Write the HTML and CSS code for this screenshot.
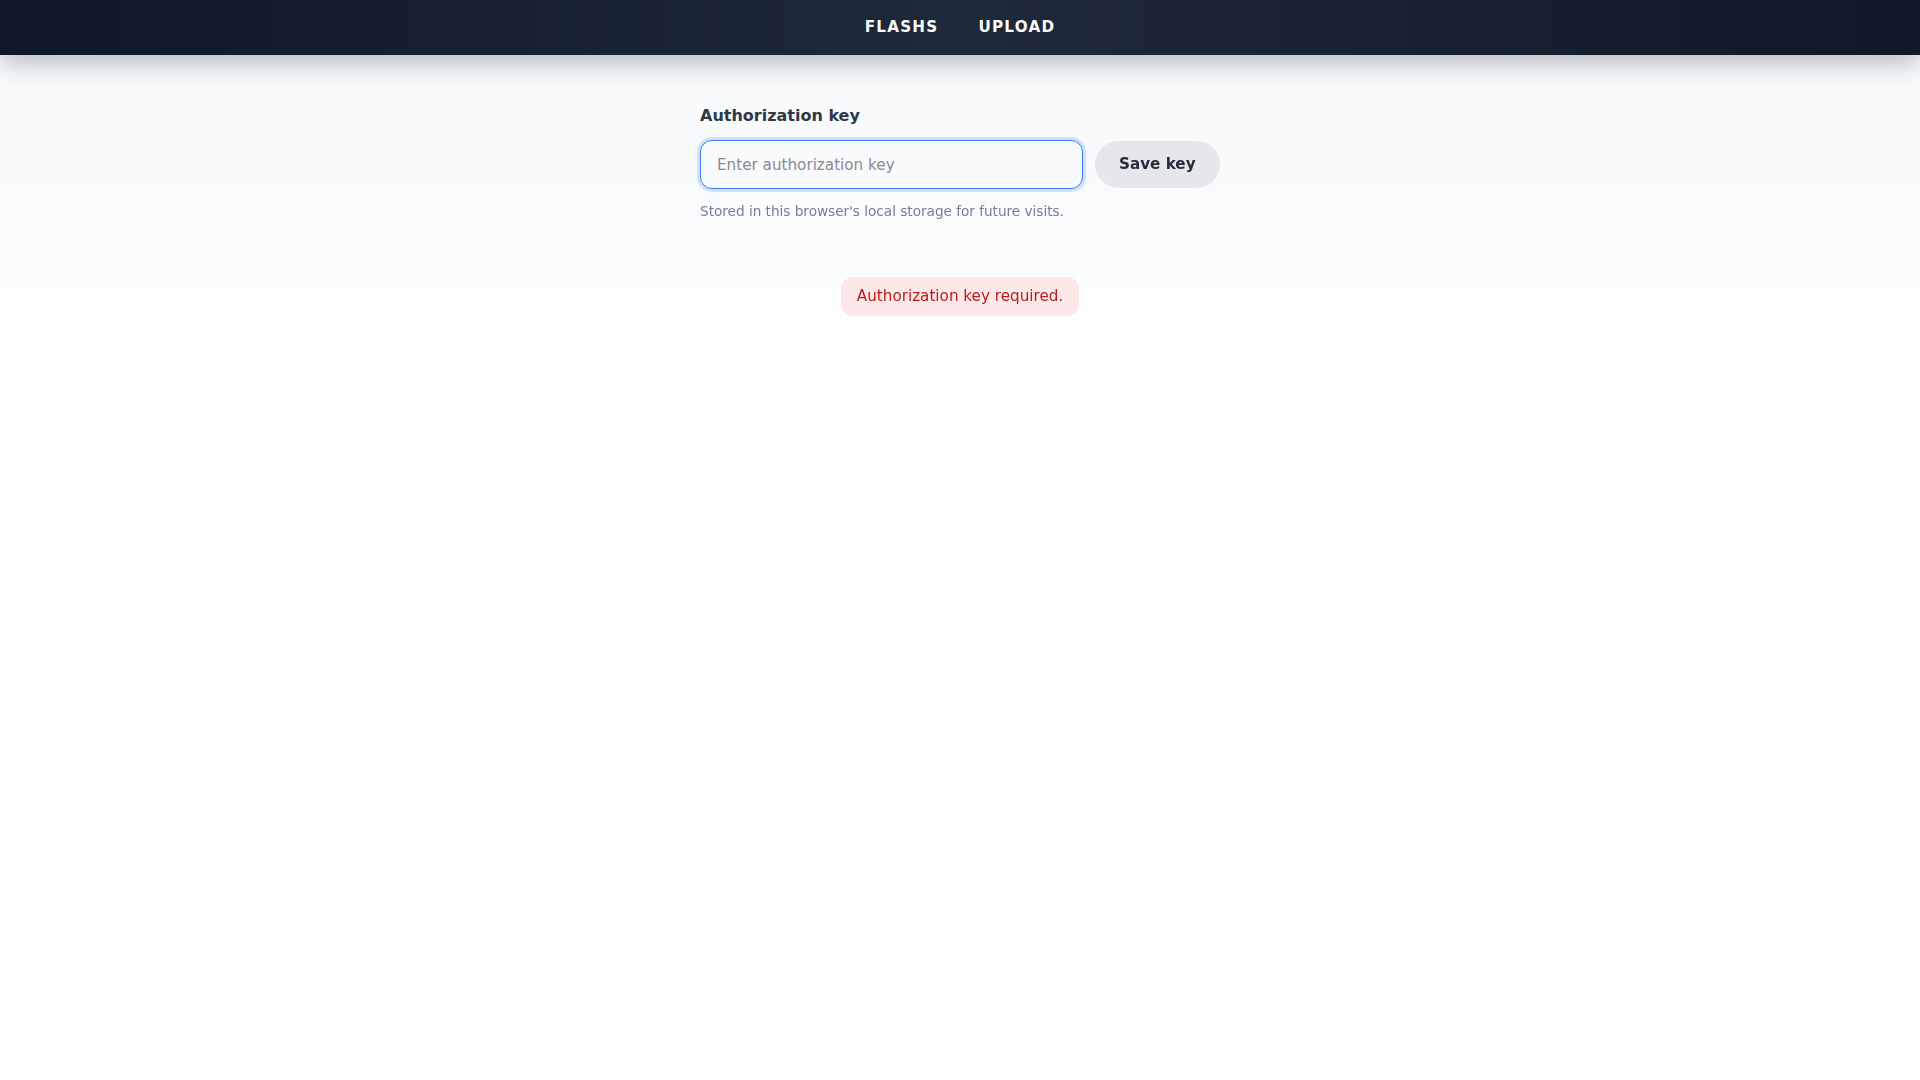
FILE: index.html
```html
<!DOCTYPE html>
<html lang="en">
<head>
<meta charset="utf-8">
<title>Authorization</title>
<link rel="stylesheet" href="styles.css">
</head>
<body>
<header class="topbar">
  <nav class="nav">
    <a class="nav-link" href="#">Flashs</a>
    <a class="nav-link" href="#">Upload</a>
  </nav>
</header>
<main class="main">
  <section class="auth">
    <label class="auth-label" for="key">Authorization key</label>
    <div class="auth-row">
      <input id="key" class="auth-input" type="text" placeholder="Enter authorization key" autofocus>
      <button class="auth-btn" type="button">Save key</button>
    </div>
    <p class="auth-hint">Stored in this browser's local storage for future visits.</p>
  </section>
  <div class="status">
    <div class="status-error">Authorization key required.</div>
  </div>
</main>
</body>
</html>
```

FILE: styles.css
```css
* { box-sizing: border-box; }
html, body { margin: 0; padding: 0; }
body {
  font-family: "DejaVu Sans", "Noto Sans", sans-serif;
  min-height: 100vh;
  background: linear-gradient(180deg, #f8fafc 0px, #f9fafc 180px, #ffffff 400px);
  color: #1f2937;
}
.topbar {
  height: 55px;
  background: linear-gradient(90deg, #0f172a 0%, #1e293b 50%, #111827 100%);
  box-shadow: 0 8px 26px rgba(15, 23, 42, 0.28);
  display: flex;
  align-items: center;
  justify-content: center;
  position: relative;
  z-index: 1;
}
.nav {
  display: flex;
  gap: 40px;
  align-items: center;
}
.nav-link {
  color: #f8fafc;
  text-decoration: none;
  font-weight: bold;
  font-size: 15.2px;
  letter-spacing: 0.08em;
  text-transform: uppercase;
  line-height: 19px;
  margin-bottom: 1px;
}
.main {
  padding-top: 51px;
}
.auth {
  width: 520px;
  margin: 0 auto;
}
.auth-label {
  display: block;
  font-size: 16px;
  font-weight: bold;
  line-height: 20px;
  color: #303846;
  margin-bottom: 14px;
}
.auth-row {
  display: flex;
  align-items: center;
  gap: 12px;
}
.auth-input {
  width: 383px;
  height: 49px;
  padding: 14px 16px;
  font-family: inherit;
  font-size: 15.2px;
  line-height: 19px;
  color: #1f2937;
  background: #f9fafb;
  border: 1px solid #3b7cf0;
  border-radius: 12px;
  outline: none;
  box-shadow: 0 0 0 3px rgba(59, 130, 246, 0.22);
}
.auth-input::placeholder { color: #878b92; }
.auth-btn {
  height: 47px;
  padding: 0 24px;
  border: none;
  border-radius: 999px;
  background: #e6e7ea;
  color: #252d3b;
  font-family: inherit;
  font-size: 15.2px;
  font-weight: bold;
  line-height: 19px;
  cursor: pointer;
}
.auth-hint {
  margin: 14px 0 0;
  font-size: 13.6px;
  line-height: 16px;
  color: #737f92;
}
.status {
  display: flex;
  justify-content: center;
  margin-top: 58px;
}
.status-error {
  padding: 10px 16px;
  font-size: 15.2px;
  line-height: 19px;
  color: #b91c1c;
  background: #fce8e8;
  border-radius: 12px;
}
```
